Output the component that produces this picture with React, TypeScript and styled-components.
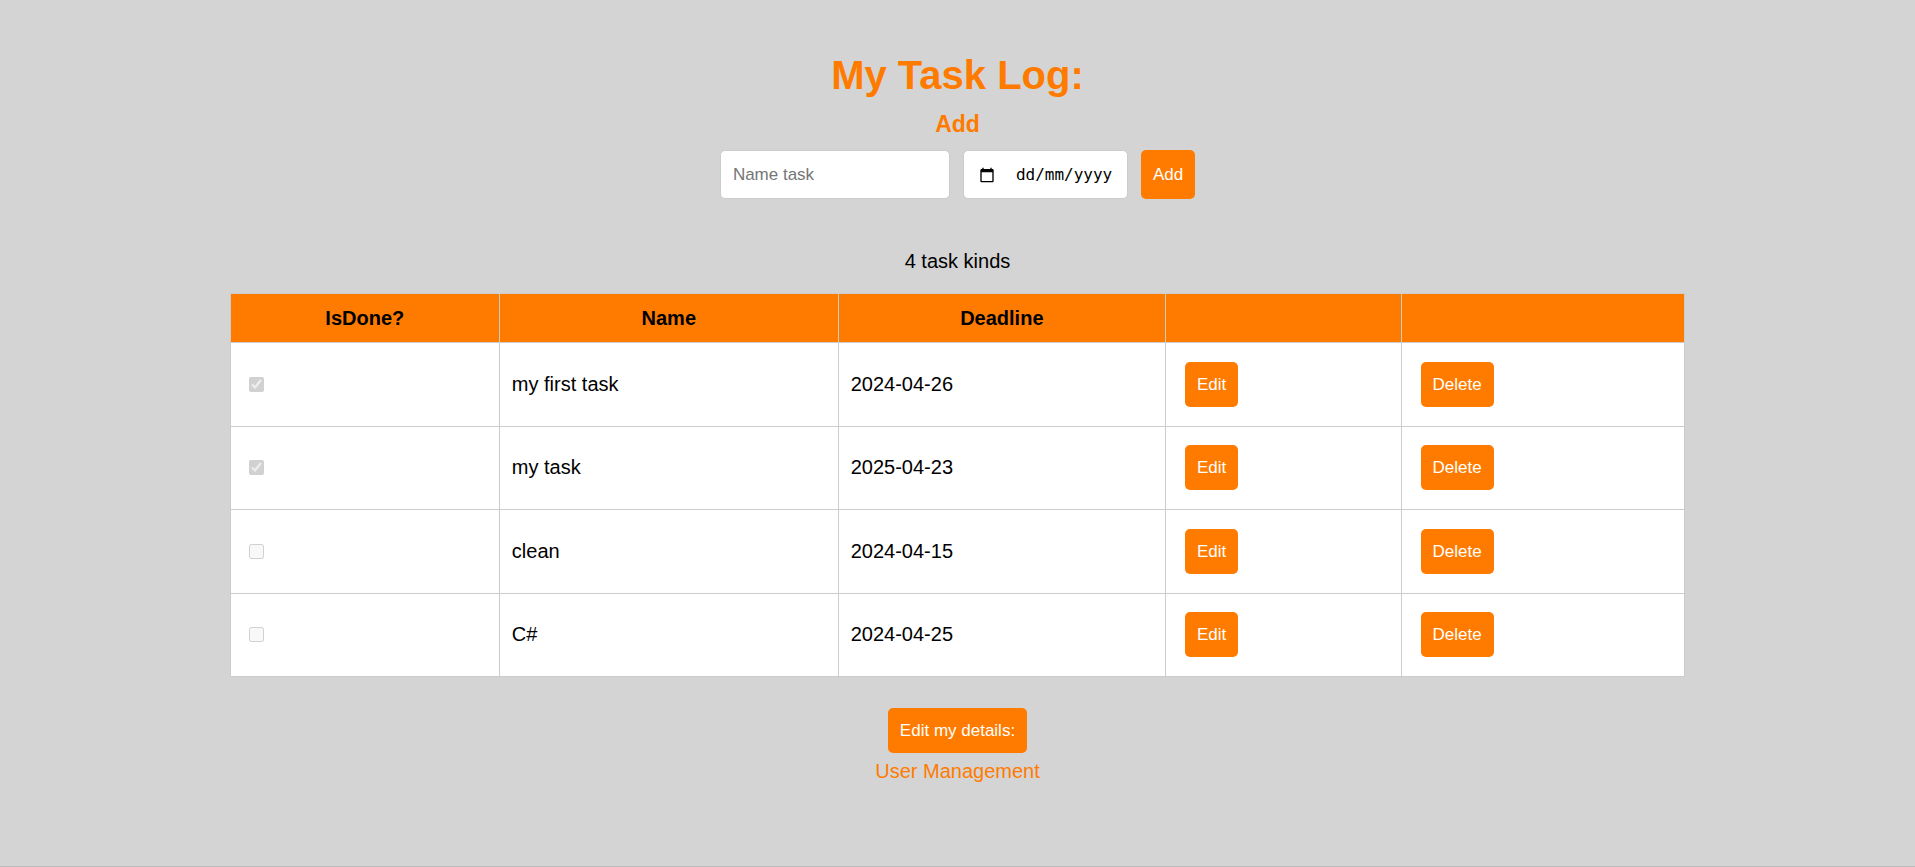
import React, { useId, useState } from "react";
import styled, { createGlobalStyle } from "styled-components";

const accent = "#ff7b00";
const line = "#cccccc";

const GlobalStyle = createGlobalStyle`
  *, *::before, *::after {
    box-sizing: border-box;
  }

  body {
    margin: 0;
    background: #d4d4d4;
    color: #000000;
    font-family: Arial, "Liberation Sans", sans-serif;
    font-size: 20px;
    line-height: 23px;
  }
`;

const Page = styled.main`
  display: flex;
  flex-direction: column;
  align-items: center;
  min-height: 100vh;
  padding: 52px 0 48px;
  border-bottom: 1px solid #bbbbbb;
`;

const Title = styled.h1`
  margin: 0 0 13px;
  color: ${accent};
  font-size: 40px;
  line-height: 46px;
`;

const Subtitle = styled.h3`
  margin: 0 0 13px;
  color: ${accent};
  font-size: 23px;
  line-height: 26px;
`;

const AddForm = styled.form`
  display: flex;
  align-items: stretch;
  gap: 13px;
  margin-bottom: 51px;
`;

const TextField = styled.input`
  width: 230px;
  padding: 14px 12px;
  border: 1px solid ${line};
  border-radius: 5px;
  background: #ffffff;
  font-family: inherit;
  font-size: 17px;
  line-height: 19px;

  &::placeholder {
    color: #757575;
  }
`;

const DateField = styled.div`
  display: flex;
  align-items: center;
  gap: 21px;
  padding: 0 13px 0 15px;
  border: 1px solid ${line};
  border-radius: 5px;
  background: #ffffff;
`;

const PickerButton = styled.button`
  display: flex;
  padding: 0;
  border: 0;
  background: none;
  color: #000000;
  cursor: pointer;
`;

const DateInput = styled.input`
  width: 98px;
  padding: 0;
  border: 0;
  outline: 0;
  background: none;
  font-family: "DejaVu Sans Mono", monospace;
  font-size: 16px;
  line-height: 19px;

  &::placeholder {
    color: #000000;
  }
`;

const Button = styled.button<{ $tall?: boolean }>`
  padding: ${(p) => (p.$tall ? "15px" : "13px")} 12px;
  border: 0;
  border-radius: 5px;
  background: ${accent};
  color: #ffffff;
  font-family: inherit;
  font-size: 17px;
  line-height: 19px;
  cursor: pointer;
`;

const Counter = styled.div`
  margin-bottom: 20px;
`;

const TaskTable = styled.table`
  width: 76%;
  height: 384px;
  margin-bottom: 31px;
  border-collapse: collapse;
  table-layout: fixed;
  background: #ffffff;
`;

const Column = styled.col<{ $share: number }>`
  width: ${(p) => p.$share}%;
`;

const HeadCell = styled.th`
  height: 49px;
  padding: 12px;
  border: 1px solid ${line};
  background: ${accent};
`;

const Cell = styled.td`
  padding: 12px;
  border: 1px solid ${line};
  text-align: left;

  & > ${Button} {
    display: block;
    margin: 6px 7px;
  }
`;

const Checkbox = styled.input`
  display: block;
  width: 15px;
  height: 15px;
  margin: 6px;
`;

const UserLink = styled.a`
  margin-top: 7px;
  color: ${accent};
  text-decoration: none;
`;

const CalendarIcon = () => (
  <svg width="16" height="16" viewBox="0 0 24 24" fill="currentColor" aria-hidden="true">
    <path d="M20 3h-1V1h-2v2H7V1H5v2H4c-1.1 0-2 .9-2 2v16c0 1.1.9 2 2 2h16c1.1 0 2-.9 2-2V5c0-1.1-.9-2-2-2zm0 18H4V8h16v13z" />
  </svg>
);

interface Task {
  id: number;
  name: string;
  deadline: string;
  isDone: boolean;
}

const initialTasks: Task[] = [
  { id: 1, name: "my first task", deadline: "2024-04-26", isDone: true },
  { id: 2, name: "my task", deadline: "2025-04-23", isDone: true },
  { id: 3, name: "clean", deadline: "2024-04-15", isDone: false },
  { id: 4, name: "C#", deadline: "2024-04-25", isDone: false },
];

export default function App() {
  const [tasks, setTasks] = useState(initialTasks);
  const [name, setName] = useState("");
  const [deadline, setDeadline] = useState("");
  const dateId = useId();

  const addTask = (event: React.FormEvent) => {
    event.preventDefault();
    if (!name) return;
    const iso = deadline.split("/").reverse().join("-");
    setTasks([...tasks, { id: Date.now(), name, deadline: iso, isDone: false }]);
    setName("");
    setDeadline("");
  };

  return (
    <>
      <GlobalStyle />
      <Page>
        <Title>My Task Log:</Title>
        <Subtitle>Add</Subtitle>
        <AddForm onSubmit={addTask}>
          <TextField
            type="text"
            aria-label="Name task"
            placeholder="Name task"
            value={name}
            onChange={(e) => setName(e.target.value)}
          />
          <DateField>
            <PickerButton
              type="button"
              aria-label="Pick a date"
              onClick={() => document.getElementById(dateId)?.focus()}
            >
              <CalendarIcon />
            </PickerButton>
            <DateInput
              id={dateId}
              type="text"
              aria-label="Deadline"
              placeholder="dd/mm/yyyy"
              value={deadline}
              onChange={(e) => setDeadline(e.target.value)}
            />
          </DateField>
          <Button type="submit" $tall>
            Add
          </Button>
        </AddForm>

        <Counter>{tasks.length} task kinds</Counter>
        <TaskTable>
          <colgroup>
            <Column $share={18.5} />
            <Column $share={23.3} />
            <Column $share={22.5} />
            <Column $share={16.2} />
            <Column $share={19.5} />
          </colgroup>
          <thead>
            <tr>
              <HeadCell>IsDone?</HeadCell>
              <HeadCell>Name</HeadCell>
              <HeadCell>Deadline</HeadCell>
              <HeadCell />
              <HeadCell />
            </tr>
          </thead>
          <tbody>
            {tasks.map((task) => (
              <tr key={task.id}>
                <Cell>
                  <Checkbox type="checkbox" aria-label={`${task.name} is done`} checked={task.isDone} disabled readOnly />
                </Cell>
                <Cell>{task.name}</Cell>
                <Cell>{task.deadline}</Cell>
                <Cell>
                  <Button type="button">Edit</Button>
                </Cell>
                <Cell>
                  <Button type="button" onClick={() => setTasks(tasks.filter((t) => t.id !== task.id))}>
                    Delete
                  </Button>
                </Cell>
              </tr>
            ))}
          </tbody>
        </TaskTable>

        <Button type="button">Edit my details:</Button>
        <UserLink href="#users">User Management</UserLink>
      </Page>
    </>
  );
}
